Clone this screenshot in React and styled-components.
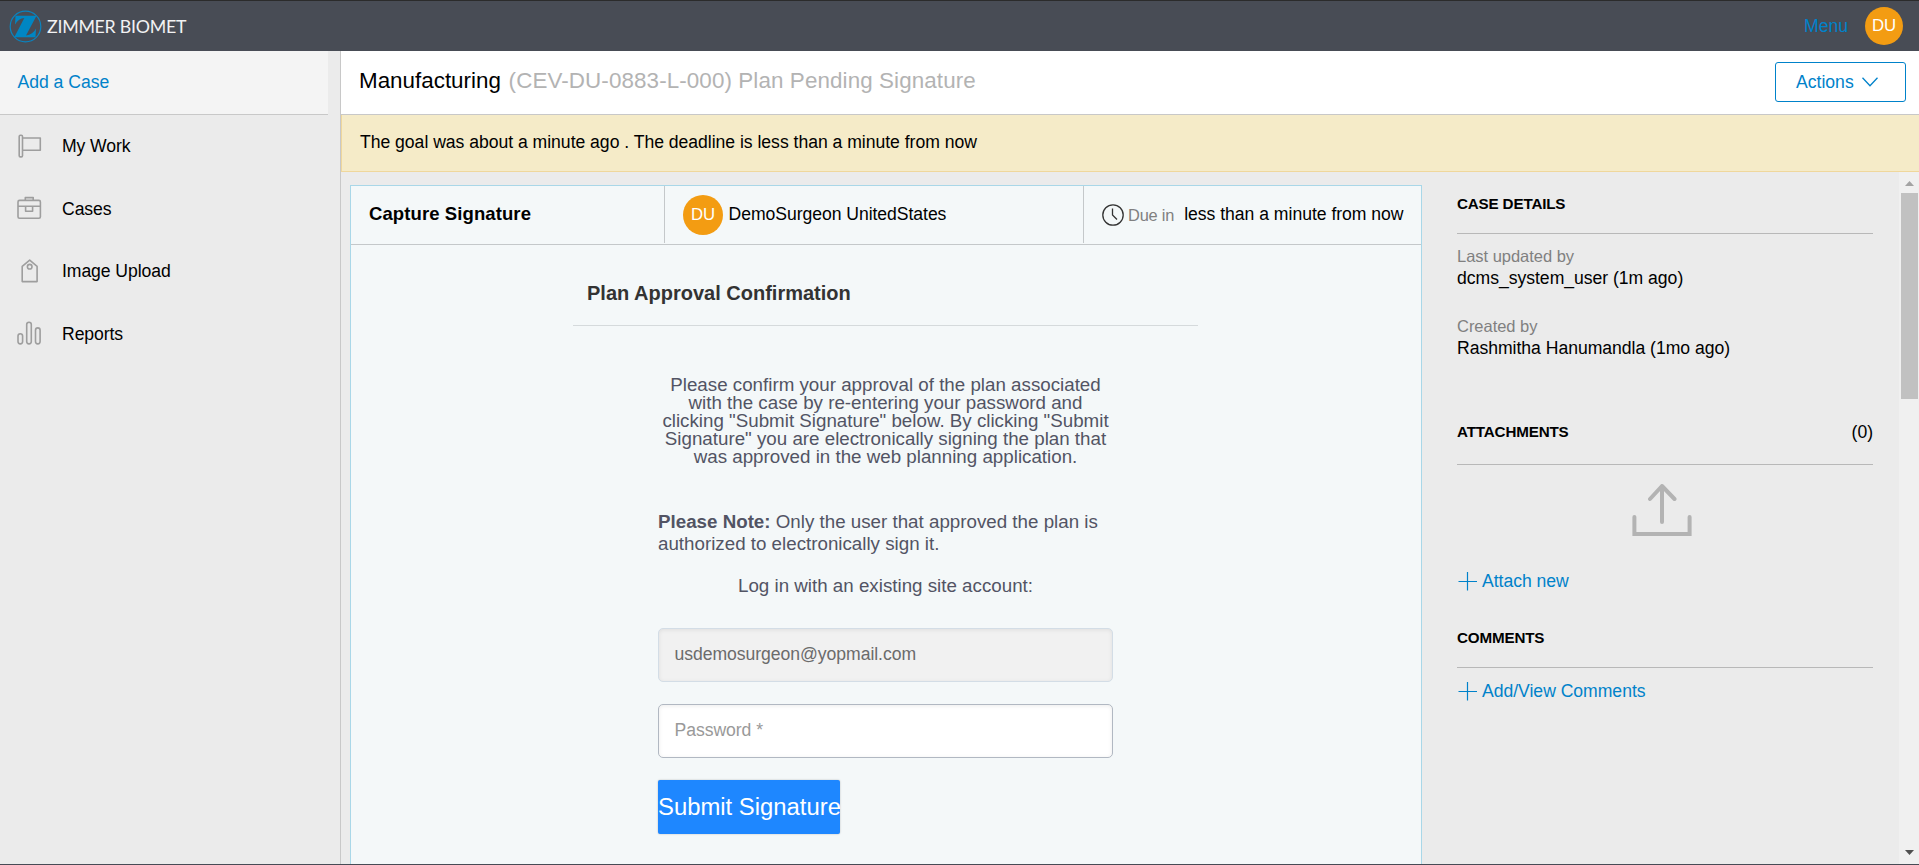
import React from 'react';
import styled, { createGlobalStyle } from 'styled-components';

const Global = createGlobalStyle`
  * { box-sizing: border-box; }
  body { margin: 0; overflow: hidden; background: #ebebeb; color: #000; letter-spacing: -.025px;
    font: 17.6px/22px "Liberation Sans", Arial, sans-serif; }
  h1, h2, h3, p { margin: 0; }
`;
const Page = styled.div`
  height: 865px; display: flex; flex-direction: column;
  border-top: 1px solid #2b2b2b; border-bottom: 1px solid #474b55;
`;
const Header = styled.header`
  height: 50px; flex: none; background: #484c55; display: flex; align-items: center;
  padding: 0 16px 0 9px;
`;
const Brand = styled.div`
  flex: 1; display: flex; align-items: center; gap: 5px; color: #f2f2f3;
  font: 17.8px/22px Lato, sans-serif; letter-spacing: -.27px;
  span { padding-bottom: 1px; }
`;
const MenuLink = styled.a`color: #0082ca; margin-right: 17px;`;
const Avatar = styled.span`
  width: ${p => p.$size}px; height: ${p => p.$size}px; border-radius: 50%; background: #f39c12;
  color: #fff; display: flex; align-items: center; justify-content: center; flex: none;
  font-size: 16.8px;
`;
const Body = styled.div`flex: 1; min-height: 0; display: flex;`;
const Sidebar = styled.nav`width: 341px; flex: none; border-right: 1px solid #c8c8c8;`;
const AddCase = styled.div`
  width: 328px; height: 64px; background: #f4f4f4; border-bottom: 1px solid #c8c8c8;
  padding: 20px 0 0 17.5px; color: #0082ca;
`;
const NavItem = styled.div`
  height: 62.5px; display: flex; align-items: center; padding-left: 17px; gap: 20px; letter-spacing: -.08px;
  svg { width: 25px; height: 25px; flex: none; overflow: visible; }
`;
const Main = styled.main`flex: 1; min-width: 0; display: flex; flex-direction: column;`;
const TitleBar = styled.div`
  height: 64px; flex: none; background: #fff; border-bottom: 1px solid #c8c8c8;
  display: flex; align-items: flex-start; justify-content: space-between; padding: 11px 13px 0 18px;
`;
const Title = styled.h1`
  font-size: 22.4px; line-height: 26px; font-weight: 400; padding-top: 6px; letter-spacing: 0;
  span { color: #b3b3b3; margin-left: 1.5px; letter-spacing: .1px; }
`;
const Actions = styled.button`
  width: 131px; height: 40px; border: 1px solid #0082ca; border-radius: 3px; background: #fff;
  color: #0082ca; font: inherit; display: flex; align-items: center; gap: 8px; padding: 0 0 0 20px;
`;
const Banner = styled.div`
  height: 57px; flex: none; background: #f5ebc8; border: 1px solid #efd79c; border-top: 0; border-right: 0;
  padding: 16px 0 0 18px;
`;
const Content = styled.div`flex: 1; min-height: 0; display: flex;`;
const Panel = styled.section`
  width: 1072px; margin: 13px 0 0 9px; background: #f4f8f9; border: 1px solid #a9d7e8; border-bottom: 0;
`;
const PanelHead = styled.div`height: 59px; border-bottom: 1px solid #c4c8ca; display: flex;`;
const Cell = styled.div`
  width: ${p => p.$w}px; height: 57px; display: flex; align-items: center; white-space: nowrap;
  border-right: ${p => (p.$last ? 0 : 1)}px solid #c4c8ca; padding-left: 18px;
`;
const Step = styled.h2`font-size: 18.5px; line-height: 22px; letter-spacing: .1px; padding-bottom: 1px;`;
const Name = styled.span`margin-left: 5.5px; padding-bottom: 2px; letter-spacing: -.05px;`;
const Due = styled.span`color: #808080; margin: 0 10px 0 4px; font-size: 16.4px; letter-spacing: -.2px;`;
const DueValue = styled.span`padding-bottom: 2px;`;
const Form = styled.form`
  width: 625px; margin-left: 222px; display: flex; flex-direction: column; color: #525464;
  font-size: 18.75px; letter-spacing: 0;
`;
const FormTitle = styled.h2`
  height: 81px; padding: 37px 0 0 14px; border-bottom: 1px solid #d5dadc; color: #333; font-size: 20px; line-height: 22px;
`;
const Fields = styled.div`width: 455px; margin-left: 85px; display: flex; flex-direction: column;`;
const Intro = styled.p`margin-top: 50px; line-height: 18px; text-align: center; white-space: nowrap;`;
const Note = styled.p`margin-top: 45px; line-height: 22px;`;
const LoginHint = styled.p`margin-top: 20px; text-align: center;`;
const Field = styled.input`
  height: 54px; margin-top: ${p => p.$mt}px; border: 1px solid ${p => (p.$locked ? '#d3dde6' : '#b1b8c2')};
  border-radius: 5px; background: ${p => (p.$locked ? '#f1f1f1' : '#fff')};
  box-shadow: inset 0 1px 4px rgba(0,0,0,.08); padding: 0 15.5px 2px; outline: 0; color: #6b6b6b;
  font: 17.6px "Liberation Sans", Arial, sans-serif; letter-spacing: -.05px;
  &::placeholder { color: #999; opacity: 1; }
`;
const Submit = styled.button`
  width: 182px; height: 54px; margin-top: 22px; border: 0; border-radius: 2px; padding: 0; background: #1e87ff;
  color: #fff; font: 23.85px "Liberation Sans", Arial, sans-serif; box-shadow: 0 0 2px rgba(0,0,0,.25); white-space: nowrap;
`;
const Details = styled.aside`flex: 1; padding: 21px 26px 0 35px;`;
const SectionHead = styled.div`
  height: ${p => p.$h}px; border-bottom: 1px solid #b8b8b8; display: flex; justify-content: space-between;
  align-items: flex-start; margin-top: ${p => p.$mt || 0}px;
  h3 { font-size: 15.2px; line-height: 22px; letter-spacing: -.16px; }
`;
const Fact = styled.p`margin-top: ${p => p.$mt}px;`;
const Label = styled.span`display: block; height: 22px; color: #808080; font-size: 16.5px;`;
const UploadIcon = styled.svg`display: block; margin: 18px 0 0 174px;`;
const AddLink = styled.a`
  display: flex; align-items: center; gap: 5px; height: 22px; color: #0082ca; margin-top: ${p => p.$mt}px;
`;
const Scrollbar = styled.div`
  width: 20px; background: #f0f0f0; display: flex; flex-direction: column; align-items: center; padding: 9px 0;
`;
const Thumb = styled.div`width: 17px; height: 206px; margin: 7px 0 auto 1px; background: #c1c1c1;`;

const Plus = () => (
  <svg width="20" height="20" viewBox="0 0 20 20" stroke="#0082ca" strokeWidth="1.2"><path d="M10.500 1v18.500M1.500 10.500h18.500" /></svg>
);
const stroke = { fill: 'none', stroke: '#9e9e9e', strokeWidth: 1.6, strokeLinejoin: 'round' };

const icons = {
  flag: <svg viewBox="0 0 25 25" {...stroke}><rect x="2.200" y="1.200" width="3.300" height="21.700" rx="1.200" /><path d="M5.500 4h17.800v12.200H5.500" /></svg>,
  bag: <svg viewBox="0 0 25 25" {...stroke}><rect x="1" y="4.400" width="22.400" height="17.800" rx="1.500" /><path d="M8.300 4.400V1.600h7.900v2.800M1 10.300h22.400M8.600 10.300v5h7v-5" /></svg>,
  tag: <svg viewBox="0 0 25 25" {...stroke}><path d="M12.700 1.200l7.400 6.200v15.200H5.200V7.400z" /><circle cx="12.700" cy="7.700" r="2.300" /></svg>,
  bars: <svg viewBox="0 0 25 25" {...stroke}><rect x="1" y="12.700" width="4.600" height="10.200" rx="2.300" /><rect x="9.700" y="1.200" width="4.600" height="21.700" rx="2.300" /><rect x="18.500" y="6.900" width="4.600" height="16" rx="2.300" /></svg>,
};

export default function App() {
  return (
    <Page>
      <Global />
      <Header>
        <Brand>
          <svg width="33" height="33" viewBox="0 0 33 33">
            <circle cx="16.500" cy="16.500" r="15.300" fill="none" stroke="#0a83bf" strokeWidth="1.200" />
            <path fill="#0086c3" d="M6.500 5.700H27.500L17 25.500C21.500 25 25 22.500 27 18.500L26.500 27.300H5.300L15.300 8C11.500 8.300 8.500 10.500 6 14.500z" />
          </svg>
          <span>ZIMMER BIOMET</span>
        </Brand>
        <MenuLink>Menu</MenuLink>
        <Avatar $size={38}>DU</Avatar>
      </Header>
      <Body>
        <Sidebar>
          <AddCase>Add a Case</AddCase>
          <NavItem>{icons.flag}My Work</NavItem>
          <NavItem>{icons.bag}Cases</NavItem>
          <NavItem>{icons.tag}Image Upload</NavItem>
          <NavItem>{icons.bars}Reports</NavItem>
        </Sidebar>
        <Main>
          <TitleBar>
            <Title>Manufacturing <span>(CEV-DU-0883-L-000) Plan Pending Signature</span></Title>
            <Actions>Actions
              <svg width="16" height="10" viewBox="0 0 16 10" fill="none" stroke="#0082ca" strokeWidth="1.300"><path d="M.5 .8L8 8.800 15.500 .8" /></svg>
            </Actions>
          </TitleBar>
          <Banner>The goal was about a minute ago . The deadline is less than a minute from now</Banner>
          <Content>
            <Panel>
              <PanelHead>
                <Cell $w={314}><Step>Capture Signature</Step></Cell>
                <Cell $w={419}><Avatar $size={40}>DU</Avatar><Name>DemoSurgeon UnitedStates</Name></Cell>
                <Cell $w={337} $last>
                  <svg width="22" height="22" viewBox="0 0 22 22" fill="none" stroke="#333" strokeWidth="1.300"><circle cx="11" cy="11" r="10.200" /><path d="M10.500 4.500v6.500l4.500 4.500" /></svg>
                  <Due>Due in</Due><DueValue>less than a minute from now</DueValue>
                </Cell>
              </PanelHead>
              <Form>
                <FormTitle>Plan Approval Confirmation</FormTitle>
                <Fields>
                  <Intro>
                    Please confirm your approval of the plan associated<br />with the case by re-entering your password and<br />
                    clicking "Submit Signature" below. By clicking "Submit<br />Signature" you are electronically signing the plan that<br />
                    was approved in the web planning application.
                  </Intro>
                  <Note><b>Please Note:</b> Only the user that approved the plan is authorized to electronically sign it.</Note>
                  <LoginHint>Log in with an existing site account:</LoginHint>
                  <Field $mt={31} $locked readOnly value="usdemosurgeon@yopmail.com" />
                  <Field $mt={22} placeholder="Password *" />
                  <Submit type="button">Submit Signature</Submit>
                </Fields>
              </Form>
            </Panel>
            <Details>
              <SectionHead $h={41}><h3>CASE DETAILS</h3></SectionHead>
              <Fact $mt={11}><Label>Last updated by</Label>dcms_system_user (1m ago)</Fact>
              <Fact $mt={26}><Label>Created by</Label>Rashmitha Hanumandla (1mo ago)</Fact>
              <SectionHead $h={44} $mt={62}><h3>ATTACHMENTS</h3><span>(0)</span></SectionHead>
              <UploadIcon width="62" height="53" viewBox="0 0 62 53" fill="none" stroke="#b3b3b3" strokeWidth="4" strokeLinecap="round">
                <path d="M3.400 34v17h55.200V34" /><path d="M31 39V3M19 16L31 3l12.500 13" strokeLinejoin="round" />
              </UploadIcon>
              <AddLink $mt={34}><Plus />Attach new</AddLink>
              <SectionHead $h={41} $mt={35}><h3>COMMENTS</h3></SectionHead>
              <AddLink $mt={12}><Plus />Add/View Comments</AddLink>
            </Details>
            <Scrollbar>
              <svg width="9" height="5" viewBox="0 0 9 5"><path d="M0 5L4.500 0 9 5z" fill="#a3a3a3" /></svg>
              <Thumb />
              <svg width="9" height="5" viewBox="0 0 9 5"><path d="M0 0L4.500 5 9 0z" fill="#505050" /></svg>
            </Scrollbar>
          </Content>
        </Main>
      </Body>
    </Page>
  );
}
